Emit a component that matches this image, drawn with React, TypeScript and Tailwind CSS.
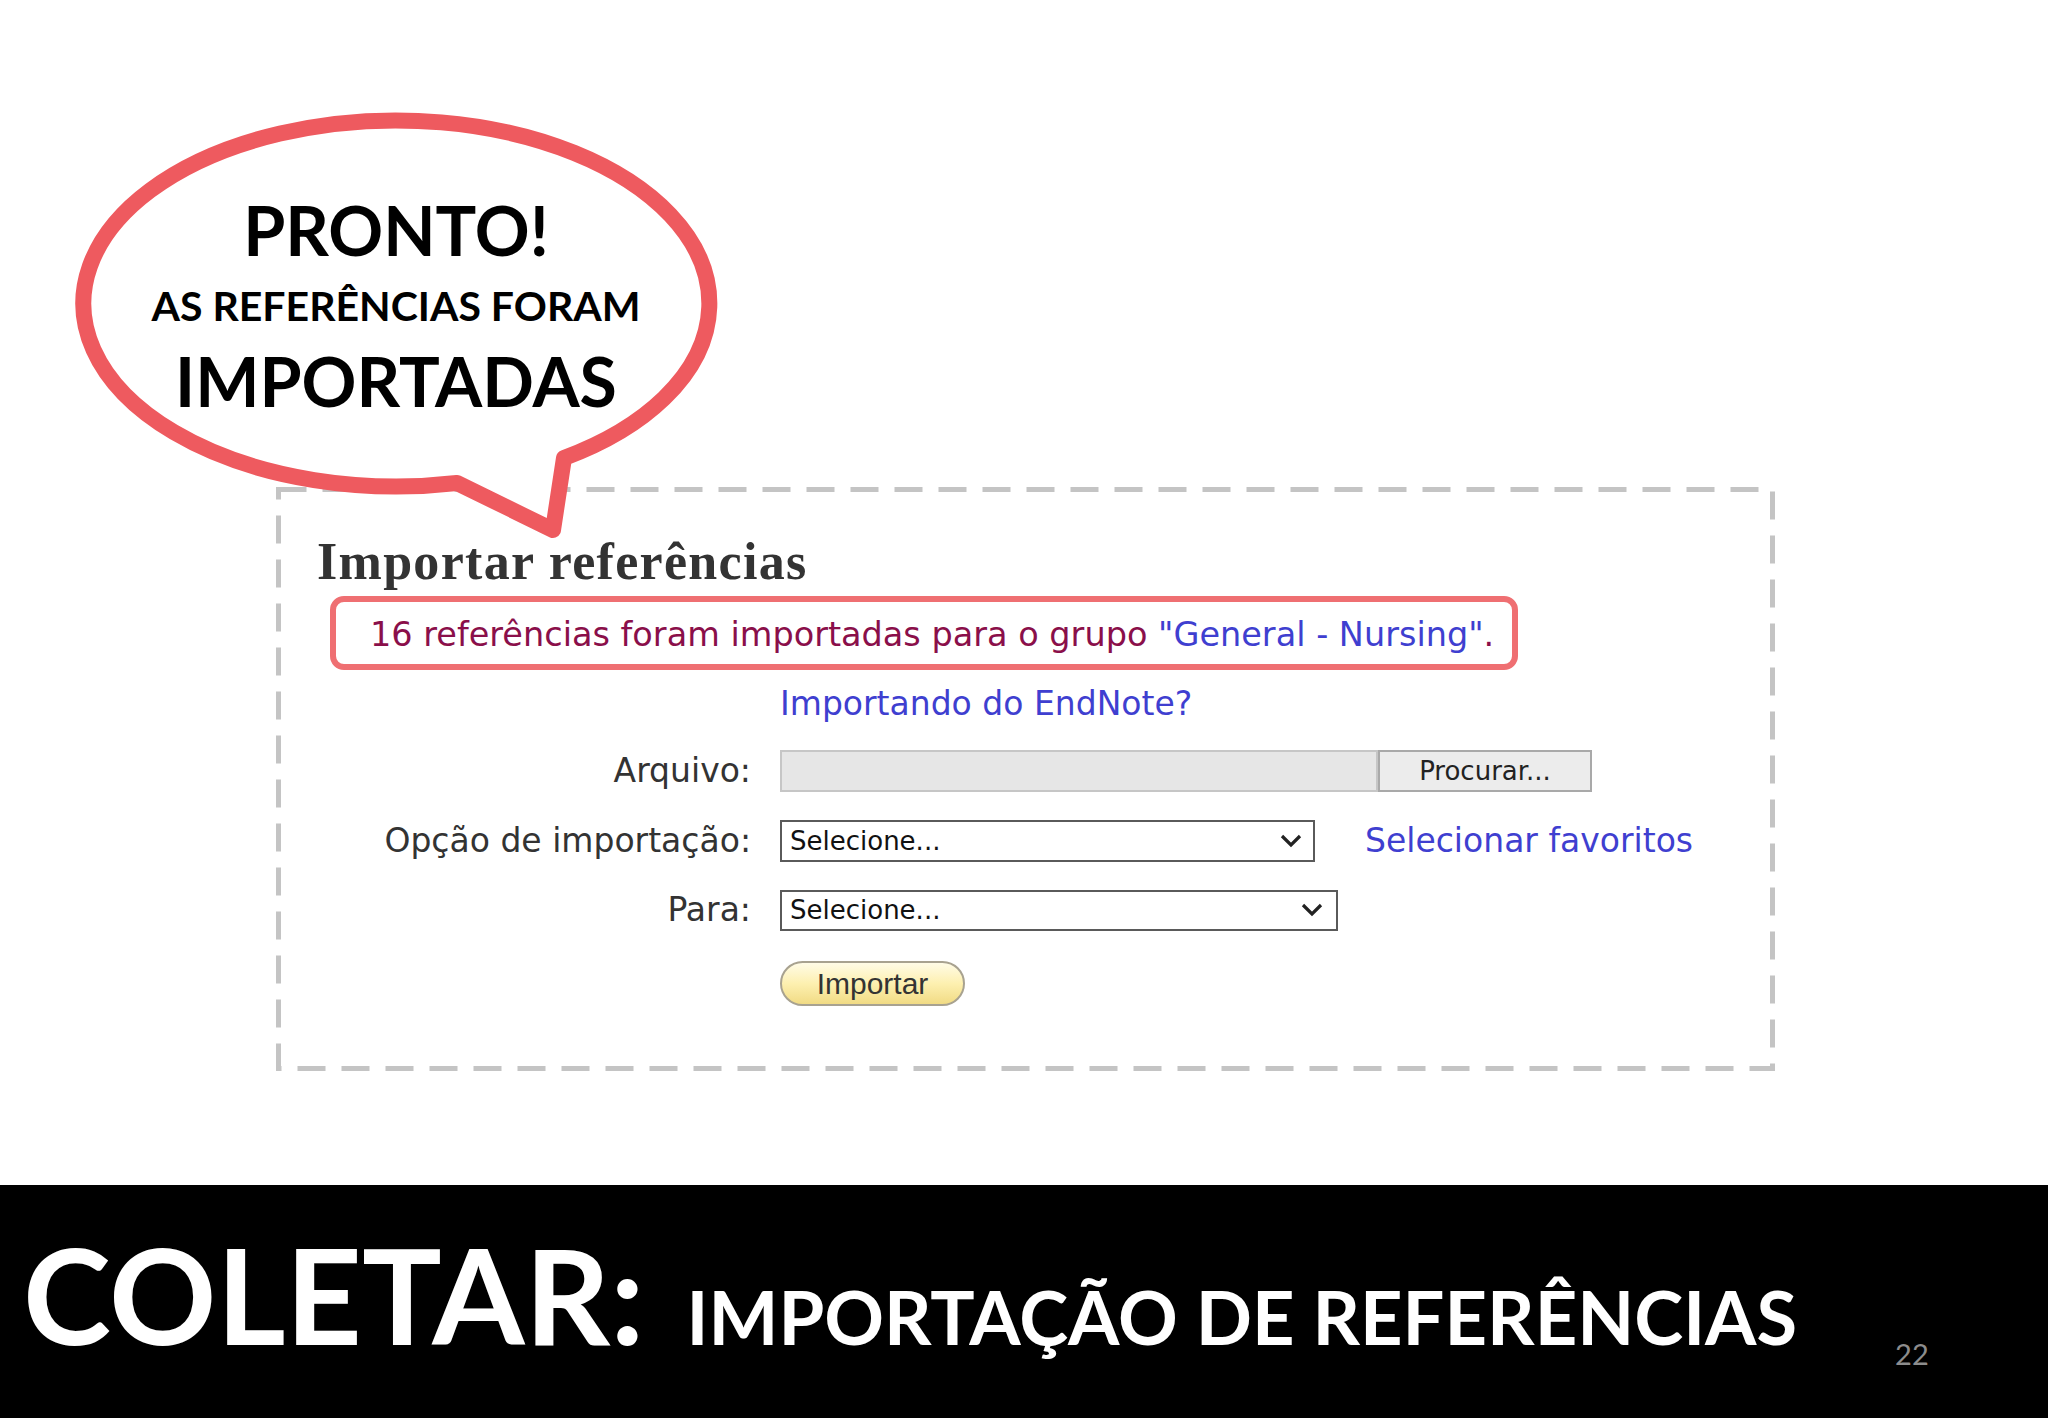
import React from 'react';

const Chevron: React.FC = () => (
  <svg width="22" height="14" viewBox="0 0 22 14" className="shrink-0">
    <polyline points="2,2 11,11 20,2" fill="none" stroke="#222" strokeWidth="3.2" strokeLinejoin="miter" />
  </svg>
);

const SpeechBubble: React.FC = () => (
  <div className="absolute left-0 top-0 w-[800px] h-[560px] pointer-events-none z-10">
    <svg width="800" height="560" viewBox="0 0 800 560" className="absolute left-0 top-0">
      <path
        d="M 564 458 A 313 183 0 1 0 457 483 L 553 530 Z"
        fill="#ffffff"
        stroke="#ee5a5f"
        strokeWidth="16"
        strokeLinejoin="round"
      />
    </svg>
    <div className="absolute left-[96px] top-[196px] w-[600px] flex flex-col items-center font-['Lato',sans-serif] font-bold text-black">
      <div className="text-[68px] leading-[68px]">PRONTO!</div>
      <div className="text-[41px] leading-[41px] mt-[21px]">AS REFERÊNCIAS FORAM</div>
      <div className="text-[68px] leading-[68px] mt-[21px]">IMPORTADAS</div>
    </div>
  </div>
);

const FormRow: React.FC<{ label: string; className?: string; children: React.ReactNode }> = ({ label, className, children }) => (
  <div className={`flex items-center h-[42px] ${className ?? ''}`}>
    <div className="w-[504px] pr-[29px] text-right text-[33px] leading-[42px] text-[#333]">{label}</div>
    {children}
  </div>
);

export default function App() {
  return (
    <div className="relative w-[2048px] h-[1418px] overflow-hidden bg-white flex flex-col">
      <SpeechBubble />

      <div className="h-[1185px] flex flex-col">
        {/* imported screenshot area */}
        <div className="relative mt-[487px] ml-[276px] w-[1499px] h-[584px] flex flex-col font-['DejaVu_Sans',sans-serif]">
          <svg width="1499" height="584" className="absolute left-0 top-0 pointer-events-none">
            <rect x="2.5" y="2.5" width="1494" height="579" fill="none" stroke="#c4c4c4" strokeWidth="5" strokeDasharray="28 16" />
          </svg>

          <h2 className="mt-[49px] pl-[41px] font-['Liberation_Serif',serif] font-bold text-[52px] leading-[52px] tracking-[0.025em] text-[#333]">
            Importar referências
          </h2>

          <div className="mt-[8px] ml-[54px] w-[1188px] h-[74px] border-[6px] border-[#ef6f72] rounded-[14px] flex items-center pl-[34px] pt-[4px] text-[33.5px] text-[#8a0f4a]">
            <span>
              16 referências foram importadas para o grupo <span className="text-[#3f3fd0]">"General - Nursing"</span>.
            </span>
          </div>

          <div className="mt-[14px] ml-[504px] h-[40px] leading-[40px] text-[33px] text-[#3f3fd0]">Importando do EndNote?</div>

          <FormRow label="Arquivo:" className="mt-[26px]">
            <div className="w-[598px] h-[42px] bg-[#e6e6e6] border-2 border-[#c6c6c6]" />
            <div className="w-[214px] h-[42px] bg-[#ececec] border-2 border-[#a9a9a9] flex items-center justify-center text-[26px] text-[#222]">
              Procurar...
            </div>
          </FormRow>

          <FormRow label="Opção de importação:" className="mt-[28px]">
            <div className="w-[535px] h-[42px] border-2 border-[#5a5a5a] bg-white flex items-center justify-between pl-[8px] pr-[11px] text-[26px] text-[#111]">
              <span>Selecione...</span>
              <Chevron />
            </div>
            <div className="ml-[50px] text-[33px] leading-[42px] text-[#3f3fd0]">Selecionar favoritos</div>
          </FormRow>

          <FormRow label="Para:" className="mt-[27px]">
            <div className="w-[558px] h-[41px] border-2 border-[#5a5a5a] bg-white flex items-center justify-between pl-[8px] pr-[13px] text-[26px] text-[#111]">
              <span>Selecione...</span>
              <Chevron />
            </div>
          </FormRow>

          <div className="mt-[30px] ml-[504px] w-[185px] h-[45px] rounded-full border-2 border-[#a8a290] bg-gradient-to-b from-[#fffbe6] via-[#fdf0b0] to-[#f1db84] flex items-center justify-center font-['Liberation_Sans',sans-serif] text-[30px] text-[#333]">
            Importar
          </div>
        </div>
      </div>

      {/* bottom title bar */}
      <div className="h-[233px] bg-black flex items-end pl-[23px]">
        <div className="flex items-baseline mb-[58px] font-['Lato',sans-serif] font-bold text-white">
          <span className="text-[133px] leading-none">COLETAR:</span>
          <span className="ml-[42px] text-[74px] leading-none">IMPORTAÇÃO DE REFERÊNCIAS</span>
        </div>
        <div className="ml-[98px] mb-[50px] font-['Lato',sans-serif] text-[29px] leading-none text-[#8c8c8c]">22</div>
      </div>
    </div>
  );
}
